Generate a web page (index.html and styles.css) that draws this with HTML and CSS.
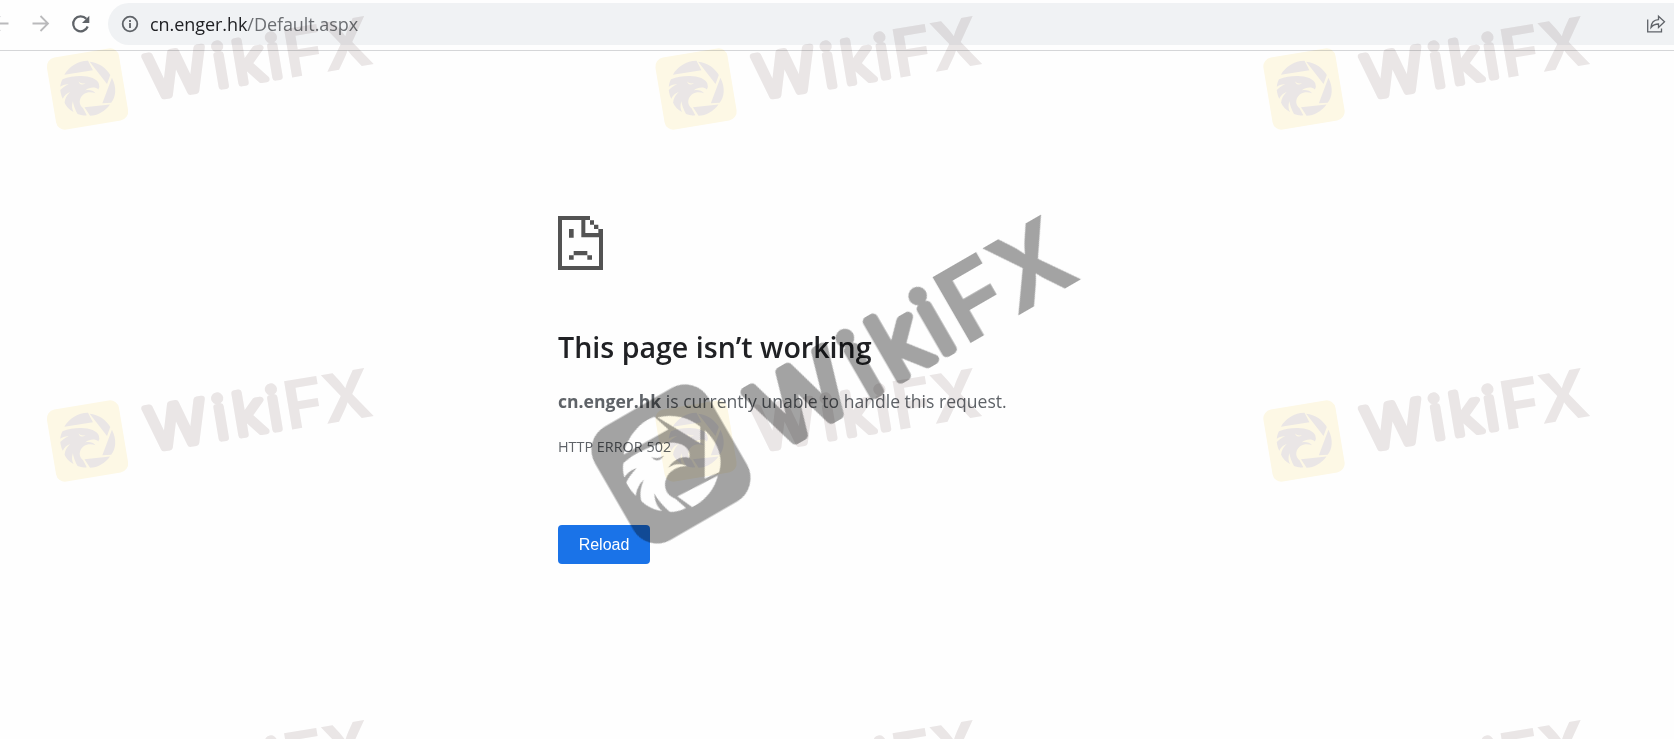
FILE: index.html
```
<!DOCTYPE html>
<html lang="en">

<head>
	<meta charset="utf-8">
	<title>cn.enger.hk</title>
	<link rel="stylesheet" href="styles.css">
</head>

<body>
	<div class="toolbar">
		<svg class="nav" width="108" height="50" viewBox="0 0 108 50">
			<g class="nav-off">
				<path d="M-6 23.5H8.5M0 16l-7.5 7.5L0 31" />
				<path d="M32.500 23.500H48M40.500 16l7.500 7.500-7.500 7.500" />
			</g>
			<path class="nav-on" d="M86.300 18.800A7.500 7.500 0 1 0 87.700 26.500" />
			<path class="nav-head" d="M89.300 15.700v7.300h-7.300z" />
		</svg>
		<div class="omnibox">
			<svg class="info" width="18" height="18" viewBox="0 0 18 18">
				<circle cx="9" cy="9" r="7.300" />
				<path d="M9 8v5M9 5v2" />
			</svg>
			<div class="url">cn.enger.hk<span>/Default.aspx</span></div>
			<svg class="share" width="20" height="20" viewBox="0 0 20 20">
				<path d="M1.700 5.500V17.800H15.500V14.500" />
				<path d="M5 13.500C5.300 8.500 8 5.800 12.500 5.600V2.200L18.500 7.800l-6 5.600V10C9.500 10 7 11 5 13.500z" />
			</svg>
		</div>
	</div>

	<div class="error">
		<svg class="sad" width="45" height="54" viewBox="0 0 135 162">
			<path fill-rule="evenodd" d="M0 0H96V13H108V26H121V39H135V162H0zM12 12V150H123V64H70V12z" />
			<path class="fold" d="M82 12h14v14h12v13h13v12H82z" />
			<path d="M33 39h14v26H33zM47 105h41v13H47zM33 118h14v13H33zM88 118h14v13H88z" />
		</svg>
		<h1>This page isn’t working</h1>
		<p class="summary"><b>cn.enger.hk</b> is currently unable to handle this request.</p>
		<div class="code">HTTP ERROR 502</div>
		<button type="button">Reload</button>
	</div>

	<svg class="watermark" width="1674" height="739" viewBox="0 0 1674 739">
		<defs>
			<!-- eagle inside the shutter ring, centred on 0,0 -->
			<g id="eagle">
				<path transform="rotate(30) scale(.3333) translate(-255 -252)" fill-rule="evenodd" d="
					M113 224C120 175 160 125 205 110L247 148z
					M215 112C262 100 310 112 343 140V190z
					M356 150C400 190 412 240 399 277L356 296z
					M274 349L396 287C385 330 355 365 318 381z
					M112 250C135 226 165 213 193 201C235 183 285 182 302 204Q314 218 310 234C290 226 262 238 246 264C266 250 286 250 303 258C262 259 237 285 237 315C238 337 250 348 268 356L300 384C287 392 270 396 252 396C243 388 221 369 205 341C206 365 215 382 228 393C200 389 179 376 166 363C161 344 163 322 174 300C158 313 151 332 150 347C138 337 126 319 121 308C127 294 137 280 152 264C135 269 123 279 115 292C111 278 110 265 112 250z
					M196 231Q215 240 234 226Q221 247 205 239z" />
			</g>
			<mask id="cut">
				<rect x="-70" y="-70" width="140" height="140" fill="#fff" />
				<use href="#eagle" fill="#000" />
			</mask>
			<g id="word">
				<g class="round">
					<text x="98" y="41" textLength="94" lengthAdjust="spacingAndGlyphs">W</text>
					<text x="203" y="41">i</text>
					<text x="234" y="41">k</text>
					<text x="287" y="41">i</text>
				</g>
				<g class="sharp">
					<text x="313" y="45.300">F</text>
					<text x="372.500" y="45.300">X</text>
				</g>
			</g>
			<g id="tile" transform="rotate(-9.500)">
				<rect class="badge" x="-36.500" y="-36.500" width="73" height="73" rx="9" />
				<use class="ink" href="#eagle" transform="scale(.5625)" />
				<use class="ink" href="#word" transform="translate(-3.500 -6.500) scale(.648 .64)" />
			</g>
		</defs>
		<use class="tile" href="#tile" x="87.500" y="89" />
		<use class="tile" href="#tile" x="696" y="89" />
		<use class="tile" href="#tile" x="1304" y="89" />
		<use class="tile" href="#tile" x="87.500" y="441" />
		<use class="tile" href="#tile" x="696" y="441" />
		<use class="tile" href="#tile" x="1304" y="441" />
		<use class="tile" href="#tile" x="87.500" y="793" />
		<use class="tile" href="#tile" x="696" y="793" />
		<use class="tile" href="#tile" x="1304" y="793" />
		<g class="main-mark" transform="translate(671 464) rotate(-30)">
			<rect x="-65.500" y="-65.500" width="131" height="131" rx="27" mask="url(#cut)" />
			<use href="#word" />
		</g>
	</svg>
</body>

</html>
```
FILE: styles.css
```
body { margin: 0; height: 739px; overflow: hidden; position: relative; background: #fefefe; font-family: "Open Sans", "Noto Sans", sans-serif; color: #5f6368; }

.toolbar { display: flex; height: 50px; border-bottom: 1px solid #d5d6d8; }
.nav { flex: none; fill: none; stroke-width: 1.8; }
.nav-off { stroke: #bababc; }
.nav-on { stroke: #5f6368; stroke-width: 2.2; }
.nav-head { fill: #5f6368; }
.omnibox { flex: 1; display: flex; align-items: center; height: 42px; margin-top: 3px; padding: 0 8px 0 13px; border-radius: 21px 0 0 21px; background: #f0f2f4; }
.info { fill: none; stroke: #5f6368; stroke-width: 1.8; }
.url { flex: 1; margin-left: 11px; font-size: 18px; letter-spacing: -.06px; color: #202124; }
.url span { color: #6b6e72; }
.share { fill: none; stroke: #5f6368; stroke-width: 1.3; }

.error { margin-left: 558px; padding-top: 165px; }
.sad { display: block; fill: #535353; }
.sad .fold { fill: #fefefe; }
h1 { margin: 57px 0 0; font-size: 28.6px; line-height: 40px; font-weight: 600; color: #202124; }
.summary { margin: 22px 0 0; font-size: 17.57px; line-height: 24px; }
.code { margin-top: 24px; font-size: 14.4px; line-height: 20px; }
button { display: block; margin-top: 68px; width: 92px; height: 39px; padding: 0; border: 0; border-radius: 4px; background: #1a73e8; color: #fff; font: 16px "Liberation Sans", Arial, sans-serif; }

.watermark { position: absolute; left: 0; top: 0; pointer-events: none; }
.round { font: 300 91px Inter, sans-serif; stroke-width: 10; stroke-linejoin: round; }
.sharp { font: 700 105px Inter, sans-serif; stroke: none; }
.tile { mix-blend-mode: multiply; }
.badge { fill: #fef9e6; }
.ink { fill: #ebe7e7; stroke: #ebe7e7; stroke-width: 0; }
.main-mark { fill: #000; stroke: #000; stroke-width: 0; opacity: .36; }
```
